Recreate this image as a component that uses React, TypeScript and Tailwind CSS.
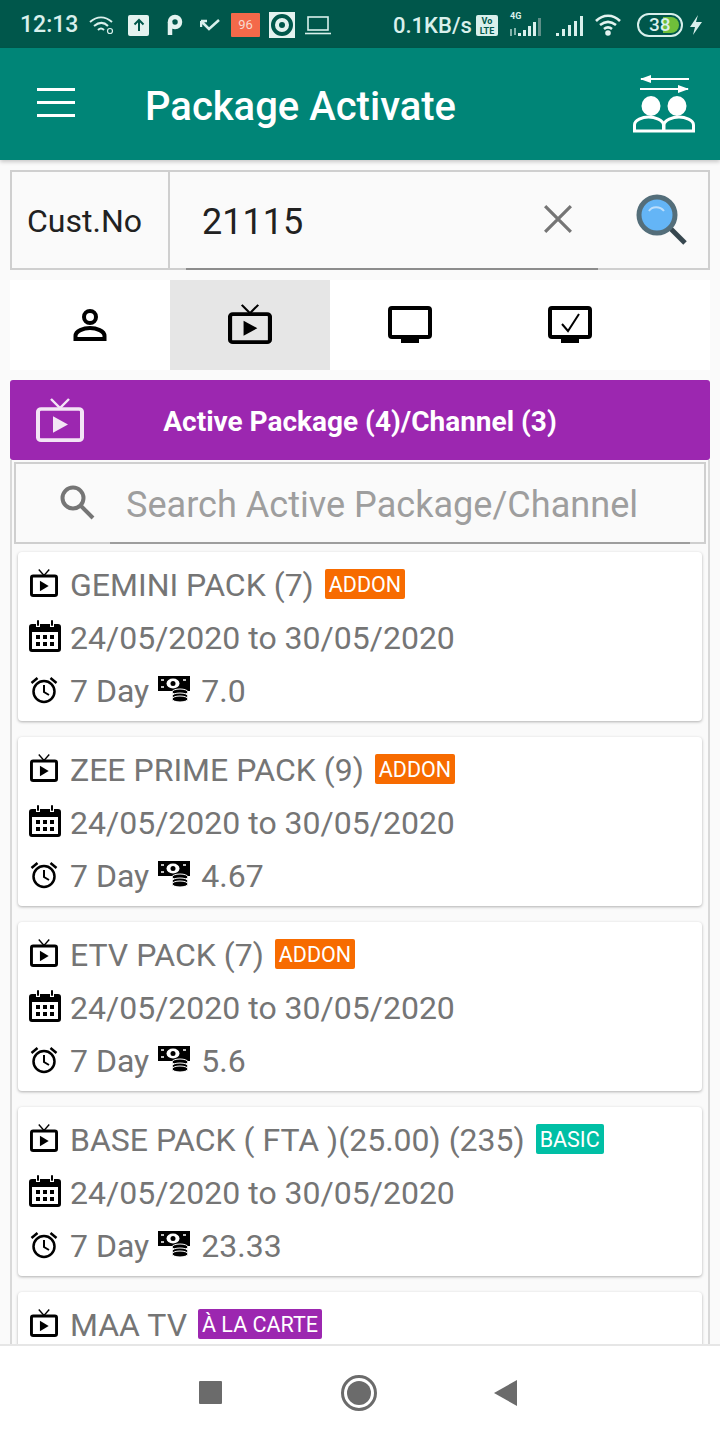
import React from 'react';

const TvIcon = ({ className, sw = 4 }: { className?: string; sw?: number }) => (
  <svg viewBox="0 0 48 48" preserveAspectRatio="none" className={className} fill="none">
    <rect x={sw / 2} y="12" width={48 - sw} height={36 - sw / 2} rx="3" stroke="currentColor" strokeWidth={sw} />
    <path d="M15 1l9 10 9-10" stroke="currentColor" strokeWidth="2.400" />
    <path d="M17 20v18l15-9z" fill="currentColor" />
  </svg>
);

const PersonIcon = () => (
  <svg viewBox="0 0 34 34" className="w-[34px] h-[34px]" fill="none" stroke="black" strokeWidth="4">
    <circle cx="17" cy="9" r="6" />
    <path d="M2.500 31v-3c0-5 8-8 14.500-8s14.500 3 14.500 8v3z" />
  </svg>
);

const MonitorIcon = ({ check }: { check?: boolean }) => (
  <svg viewBox="0 0 44 38" className="w-[44px] h-[38px]" fill="none">
    <rect x="2" y="2" width="40" height="29" rx="2" stroke="black" strokeWidth="4" />
    <rect x="13" y="32" width="18" height="5" fill="black" />
    {check && <path d="M14 18l6 7 11-17" stroke="black" strokeWidth="2" />}
  </svg>
);

const CalendarIcon = () => (
  <svg viewBox="0 0 32 32" className="w-[32px] h-[32px]">
    <path d="M0 7a3 3 0 013-3h4v3h4V4h10v3h4V4h4a3 3 0 013 3v22a3 3 0 01-3 3H3a3 3 0 01-3-3z" fill="black" />
    <rect x="8" y="0" width="2" height="6" rx="1" fill="black" />
    <rect x="22" y="0" width="2" height="6" rx="1" fill="black" />
    <rect x="3" y="12" width="26" height="17" fill="white" />
    <path d="M7 15h4v4H7zM14 15h4v4h-4zM21 15h4v4h-4zM7 22h4v4H7zM14 22h4v4h-4zM21 22h4v4h-4z" fill="black" />
  </svg>
);

const AlarmIcon = () => (
  <svg viewBox="0 0 28 28" className="w-[28px] h-[28px]" fill="none" stroke="black">
    <circle cx="14" cy="15.500" r="10.500" strokeWidth="2.500" />
    <path d="M14 9v7l5 3" strokeWidth="2" />
    <path d="M1.500 7l6-5M26.500 7l-6-5" strokeWidth="2.500" />
  </svg>
);

const MoneyIcon = () => (
  <svg viewBox="0 0 32 26" className="w-[32px] h-[26px]">
    <rect x="0" y="0" width="32" height="15" fill="black" />
    <ellipse cx="15" cy="7.500" rx="6.500" ry="5" fill="white" />
    <circle cx="15" cy="7.500" r="2.500" fill="black" />
    <path d="M3 4h3M3 11h3M25 4h3" stroke="white" strokeWidth="1.500" />
    <ellipse cx="22" cy="16" rx="8" ry="3" fill="black" stroke="white" />
    <ellipse cx="22" cy="20" rx="8" ry="3" fill="black" stroke="white" />
    <ellipse cx="22" cy="23" rx="8" ry="3" fill="black" stroke="white" />
  </svg>
);

const Badge = ({ label, color }: { label: string; color: string }) => (
  <span className={`${color} text-white text-[21.500px] leading-[32px] h-[30px] px-[4px] rounded-[2px] ml-[11px] mt-[-1px]`}>{label}</span>
);

type Pack = { name: string; badge: string; color: string; price: string };

const packs: Pack[] = [
  { name: 'GEMINI PACK (7)', badge: 'ADDON', color: 'bg-[#f76b00]', price: '7.0' },
  { name: 'ZEE PRIME PACK (9)', badge: 'ADDON', color: 'bg-[#f76b00]', price: '4.67' },
  { name: 'ETV PACK (7)', badge: 'ADDON', color: 'bg-[#f76b00]', price: '5.6' },
  { name: 'BASE PACK ( FTA )(25.00) (235)', badge: 'BASIC', color: 'bg-[#00bfa5]', price: '23.33' },
];

const TitleRow = ({ name, badge, color }: { name: string; badge: string; color: string }) => (
  <div className="flex items-center h-[53px]">
    <div className="w-[52px] pl-[12px] shrink-0 mt-[-3px]">
      <TvIcon className="w-[28px] h-[28px] text-black" sw={5} />
    </div>
    <span>{name}</span>
    <Badge label={badge} color={color} />
  </div>
);

const PackCard = ({ pack }: { pack: Pack }) => (
  <div className="h-[169px] bg-white rounded-[4px] shadow-[0_1px_3px_rgba(0,0,0,0.3)] pt-[6px] text-[32px] text-[#757575] shrink-0">
    <TitleRow name={pack.name} badge={pack.badge} color={pack.color} />
    <div className="flex items-center h-[53px]">
      <div className="w-[52px] pl-[11px] shrink-0 mt-[-3px]"><CalendarIcon /></div>
      <span>24/05/2020 to 30/05/2020</span>
    </div>
    <div className="flex items-center h-[53px]">
      <div className="w-[52px] pl-[12px] shrink-0 mt-[-2px]"><AlarmIcon /></div>
      <span>7 Day</span>
      <div className="ml-[9px] mr-[11px] mt-[-4px]"><MoneyIcon /></div>
      <span>{pack.price}</span>
    </div>
  </div>
);

const StatusBar = () => (
  <div className="h-[48px] shrink-0 bg-[#00574b] flex items-center pl-[20px] pt-[2px] text-[#d9f0ec] font-medium text-[23px] relative">
    <span className="w-[60px]">12:13</span>
    <svg viewBox="0 0 26 20" className="w-[26px] h-[20px] ml-[9px]" fill="none" stroke="#d9f0ec" strokeWidth="2">
      <path d="M1 7c7-6 15-6 22 0M5 11c5-4 10-4 14 0M9 15c2-2 4-2 6 0" />
      <circle cx="21" cy="16" r="2.500" strokeWidth="1.200" />
    </svg>
    <div className="w-[21px] h-[21px] bg-[#e4f3f0] rounded-[2px] ml-[13px] flex items-center justify-center">
      <svg viewBox="0 0 14 14" className="w-[14px] h-[14px]" fill="none" stroke="#00574b" strokeWidth="2"><path d="M7 13V2M2.500 6.500L7 2l4.500 4.500" /></svg>
    </div>
    <svg viewBox="0 0 18 22" className="w-[18px] h-[22px] ml-[16px]" fill="none" stroke="#e4f3f0" strokeWidth="4.500">
      <circle cx="10" cy="8" r="5" />
      <path d="M5 8v13" />
    </svg>
    <svg viewBox="0 0 20 14" className="w-[20px] h-[14px] ml-[17px]" fill="none" stroke="#d9f0ec" strokeWidth="2.500">
      <path d="M1 3l8 8 10-9M1 3h6M1 3v6" />
    </svg>
    <div className="w-[29px] h-[24px] bg-[#f4694a] ml-[11px] text-[13px] leading-[24px] text-center text-[#f7d9cf] font-normal rounded-[1px]">96</div>
    <div className="w-[26px] h-[26px] bg-[#e4f3f0] ml-[9px] flex items-center justify-center">
      <div className="w-[22px] h-[22px] rounded-full border-[4px] border-[#00574b] flex items-center justify-center">
        <div className="w-[6px] h-[6px] rounded-full bg-[#00574b]" />
      </div>
    </div>
    <svg viewBox="0 0 26 20" className="w-[26px] h-[20px] ml-[10px]" fill="none" stroke="#d9f0ec" strokeWidth="1.600">
      <rect x="3" y="2" width="20" height="13" />
      <path d="M0 18.500h26" />
    </svg>
    <span className="ml-[62px] w-[83px] text-[22px]">0.1KB/s</span>
    <div className="w-[22px] h-[21px] bg-[#d9f0ec] rounded-[2px] text-[#00574b] text-[9px] leading-[10px] text-center font-bold pt-[1px]">Vo<br />LTE</div>
    <div className="relative w-[40px] h-[22px] ml-[11px]">
      <span className="absolute left-[1px] top-[-3px] text-[9px] leading-[10px] font-bold">4G</span>
      <svg viewBox="0 0 40 22" className="w-[40px] h-[22px]">
        <path d="M9 22h3v-3H9zM14 22h3v-6h-3zM19 22h3v-10h-3zM24 22h3v-14h-3z" fill="#d9f0ec" />
        <path d="M29 22h3V4h-3z" fill="#5e8f88" />
        <path d="M2 22v-7M6 14v7" stroke="#d9f0ec" strokeWidth="1.200" />
      </svg>
    </div>
    <svg viewBox="0 0 28 22" className="w-[28px] h-[22px] ml-[6px]">
      <path d="M1 22h3v-3H1zM7 22h3v-7H7zM13 22h3v-11h-3zM19 22h3v-15h-3zM25 22h3V2h-3z" fill="#d9f0ec" />
    </svg>
    <svg viewBox="0 0 28 22" className="w-[28px] h-[22px] ml-[12px]" fill="none" stroke="#e4f3f0" strokeWidth="2.600">
      <path d="M1 7c7-7 17-7 24 0M5 11c5-4 11-4 16 0M9 15c2.500-2 5.500-2 8 0" />
      <circle cx="13" cy="19" r="1.500" fill="#e4f3f0" />
    </svg>
    <div className="relative w-[46px] h-[24px] ml-[14px] border-[2px] border-[#d9f0ec] rounded-[12px] text-[19px] leading-[20px] pl-[10px] overflow-hidden">
      <div className="absolute right-[2px] top-[2px] w-[16px] h-[16px] bg-[#6fbf3a] rounded-r-[8px]" />
      <span className="relative">38</span>
    </div>
    <svg viewBox="0 0 12 20" className="w-[12px] h-[20px] ml-[7px]"><path d="M8 0L0 12h5l-2 8 9-13H6z" fill="#d9f0ec" /></svg>
  </div>
);

export default function App() {
  return (
    <div className="w-[720px] h-[1440px] flex flex-col overflow-hidden bg-[#fafafa] font-['Roboto',sans-serif]">
      <StatusBar />

      {/* App bar */}
      <div className="h-[112px] shrink-0 bg-[#008577] flex items-center text-white shadow-[0_2px_4px_rgba(0,0,0,0.2)] z-10 pl-[37px] pr-[25px]">
        <div className="w-[38px] flex flex-col gap-[10px] mt-[-3px]">
          <div className="h-[3px] bg-white" />
          <div className="h-[3px] bg-white" />
          <div className="h-[3px] bg-white" />
        </div>
        <div className="text-[40px] font-medium ml-[70px] flex-1 pt-[5px]">Package Activate</div>
        <svg viewBox="0 0 62 58" className="w-[62px] h-[58px]" fill="none">
          <path d="M8 4h48M7 14h48" stroke="white" strokeWidth="2" />
          <path d="M7 4l11-4v8zM56 14l-11-4v8z" fill="white" />
          <ellipse cx="18" cy="31" rx="9.500" ry="10" fill="white" />
          <ellipse cx="44" cy="31" rx="9.500" ry="10" fill="white" />
          <path d="M1.500 56v-6c0-5 8-8 14-8s15 3 15 8v6zM31 56v-6c0-5 9-8 15-8s14.500 3 14.500 8v6z" stroke="white" strokeWidth="3" />
        </svg>
      </div>

      {/* Customer search */}
      <div className="mx-[10px] mt-[10px] h-[100px] shrink-0 border-2 border-[#cfcfcf] flex relative">
        <div className="w-[158px] border-r-2 border-[#cfcfcf] flex items-center pl-[15px] text-[32px] text-[#212121] pt-[2px]">Cust.No</div>
        <div className="flex-1 flex items-center text-[36px] text-[#212121] pl-[32px] pt-[3px]">21115</div>
        <svg viewBox="0 0 28 28" className="absolute left-[531px] top-[32px] w-[30px] h-[30px]" fill="none" stroke="#757575" strokeWidth="3">
          <path d="M2 2l24 24M26 2L2 26" />
        </svg>
        <svg viewBox="0 0 52 52" className="absolute left-[624px] top-[22px] w-[52px] h-[52px]">
          <path d="M32 32l17 17" stroke="#37474f" strokeWidth="5" />
          <circle cx="21" cy="21" r="18" fill="#64b5f6" stroke="#546e7a" strokeWidth="5" />
          <path d="M13 17c3-5 11-5 15 0" stroke="#bbdefb" strokeWidth="2" fill="none" />
        </svg>
        <div className="absolute left-[174px] bottom-[-2px] w-[412px] h-[2px] bg-[#8c8c8c]" />
      </div>

      {/* Tabs */}
      <div className="mx-[10px] mt-[10px] h-[90px] shrink-0 bg-white flex">
        <div className="w-[160px] flex items-center justify-center"><PersonIcon /></div>
        <div className="w-[160px] bg-[#e6e6e6] flex items-center justify-center pb-[2px]"><TvIcon className="w-[44px] h-[40px] text-black" sw={4.500} /></div>
        <div className="w-[160px] flex items-center justify-center"><MonitorIcon /></div>
        <div className="w-[160px] flex items-center justify-center"><MonitorIcon check /></div>
      </div>

      {/* Active package header */}
      <div className="mx-[10px] mt-[10px] h-[80px] shrink-0 bg-[#9c27b0] rounded-[3px] flex items-center relative">
        <TvIcon className="absolute left-[26px] top-[18px] w-[48px] h-[44px] text-[#f3e5f5]" />
        <div className="flex-1 text-center text-white text-[28px] font-bold pt-[3px]">Active Package (4)/Channel (3)</div>
      </div>

      {/* Package list panel */}
      <div className="mx-[10px] flex-1 min-h-0 overflow-hidden border-x-2 border-[#d9d9d9] px-[6px] flex flex-col">
        <div className="mx-[-4px] mt-[2px] h-[82px] shrink-0 border-2 border-[#cfcfcf] flex items-center relative">
          <svg viewBox="0 0 36 36" className="absolute left-[43px] top-[20px] w-[36px] h-[36px]" fill="none" stroke="#757575">
            <circle cx="14" cy="14" r="10.500" strokeWidth="4" />
            <path d="M22 22l12 12" strokeWidth="4" />
          </svg>
          <span className="ml-[110px] text-[36.100px] text-[#9e9e9e] mt-[5px]">Search Active Package/Channel</span>
          <div className="absolute left-[94px] right-[14px] bottom-[-2px] h-[2px] bg-[#9e9e9e]" />
        </div>
        <div className="flex flex-col gap-[16px] mt-[8px]">
          {packs.map((p) => (
            <PackCard key={p.name} pack={p} />
          ))}
          <div className="h-[169px] bg-white rounded-[4px] shadow-[0_1px_3px_rgba(0,0,0,0.3)] pt-[6px] text-[32px] text-[#757575] shrink-0">
            <TitleRow name="MAA TV" badge="À LA CARTE" color="bg-[#9c27b0]" />
          </div>
        </div>
      </div>

      {/* Nav bar */}
      <div className="h-[96px] shrink-0 bg-white border-t-2 border-[#e6e6e6] flex items-center relative z-10">
        <div className="absolute left-[199px] top-[35px] w-[23px] h-[23px] bg-[#6b6b6b] rounded-[1px]" />
        <div className="absolute left-[341px] top-[29px] w-[36px] h-[36px] rounded-full border-[3px] border-[#6b6b6b] flex items-center justify-center">
          <div className="w-[24px] h-[24px] rounded-full bg-[#6b6b6b]" />
        </div>
        <svg viewBox="0 0 24 26" className="absolute left-[494px] top-[34px] w-[24px] h-[26px]"><path d="M23 0v26L0 13z" fill="#6b6b6b" /></svg>
      </div>
    </div>
  );
}
